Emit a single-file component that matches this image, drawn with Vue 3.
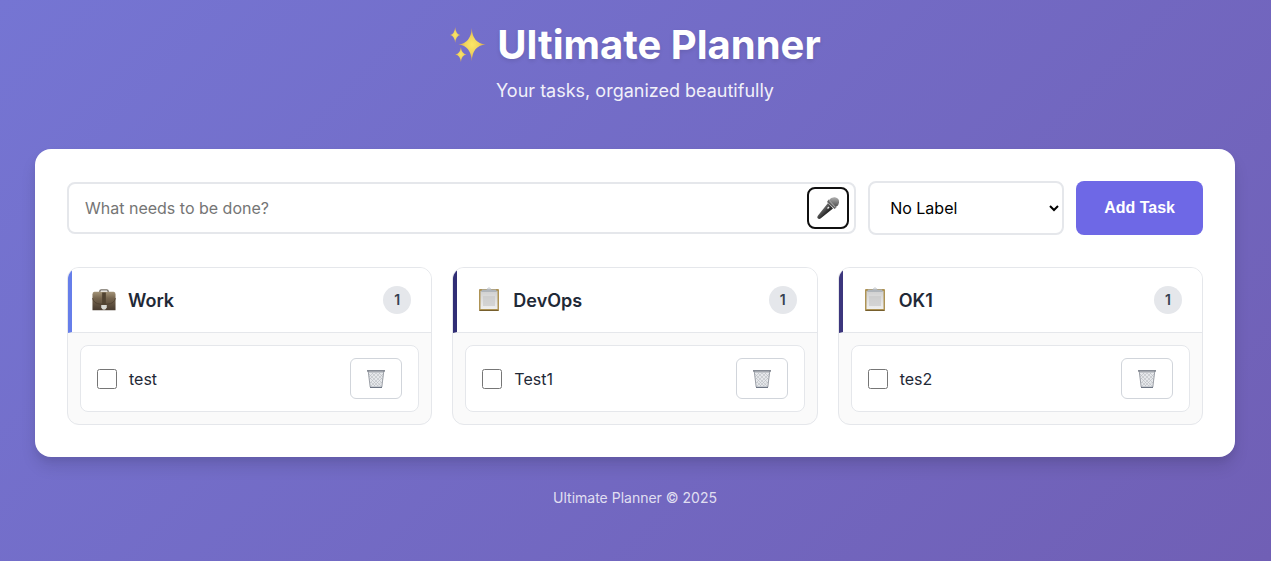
<script setup>
import { ref } from 'vue'

const draft = ref('')
const label = ref('')
const columns = ref([
  { id: 'work', name: 'Work', icon: 'briefcase', tone: 'blue', tasks: [{ id: 1, text: 'test', done: false }] },
  { id: 'devops', name: 'DevOps', icon: 'clipboard', tone: 'navy', tasks: [{ id: 2, text: 'Test1', done: false }] },
  { id: 'ok1', name: 'OK1', icon: 'clipboard', tone: 'indigo', tasks: [{ id: 3, text: 'tes2', done: false }] }
])

function addTask() {
  const text = draft.value.trim()
  const column = columns.value.find((c) => c.id === label.value) || columns.value[0]
  if (!text) return
  column.tasks.push({ id: Date.now(), text, done: false })
  draft.value = ''
}

function removeTask(column, id) {
  column.tasks = column.tasks.filter((t) => t.id !== id)
}
</script>

<template>
  <div class="page">
    <header class="hero">
      <h1>
        <svg class="sparkles" viewBox="0 0 40 40" aria-hidden="true">
          <defs>
            <radialGradient id="spark">
              <stop offset="0" stop-color="#fbe766" />
              <stop offset="0.5" stop-color="#f0d45e" />
              <stop offset="1" stop-color="#d09c50" />
            </radialGradient>
          </defs>
          <path fill="url(#spark)" d="M24 2 Q24.500 18 38.500 19.500 Q24.500 21 24 37 Q23 21 10 19.500 Q23 18 24 2Z" />
          <path fill="url(#spark)" d="M6.500 1 Q7 8.500 12 9.500 Q7 10.500 6.500 18 Q6 10.500 1 9.500 Q6 8.500 6.500 1Z" />
          <path fill="url(#spark)" d="M12.500 22 Q13 29 18.500 30 Q13 31 12.500 38 Q12 31 6.500 30 Q12 29 12.500 22Z" />
        </svg>
        <span>Ultimate Planner</span>
      </h1>
      <p>Your tasks, organized beautifully</p>
    </header>

    <main class="panel">
      <form class="composer" @submit.prevent="addTask">
        <div class="entry">
          <input v-model="draft" class="entry-input" type="text" placeholder="What needs to be done?" aria-label="New task" />
          <button class="mic" type="button" aria-label="Voice input">
            <svg viewBox="0 0 24 24" aria-hidden="true">
              <defs>
                <linearGradient id="mic-body" x1="0" y1="0" x2="1" y2="1">
                  <stop offset="0.3" stop-color="#777" />
                  <stop offset="0.6" stop-color="#292929" />
                </linearGradient>
                <linearGradient id="mic-head" x1="0" y1="0" x2="0" y2="1">
                  <stop offset="0" stop-color="#b0b0b0" />
                  <stop offset="1" stop-color="#4d4d4d" />
                </linearGradient>
              </defs>
              <path d="M12 7 L17 12.500 L4.500 22.500 Q3 23.500 1.500 22 Q.8 21 2 19.500Z" fill="url(#mic-body)" />
              <path d="M13 4 Q15 .8 19 1.200 Q23.500 2 23 6.500 Q22.500 10 19.500 11Z" fill="url(#mic-head)" />
              <path d="M12.500 3.500 L20.500 11.500 L18.500 13 L11 6Z" fill="#666" />
              <path d="M13 4.500 L19.500 11.500" stroke="#b5b5b5" stroke-width=".8" />
              <path d="M11.500 12.500 l1.500 -1.500" stroke="#eee" stroke-width="1.500" />
            </svg>
          </button>
        </div>
        <select v-model="label" class="label-select" aria-label="Label">
          <option value="">No Label</option>
          <option v-for="c in columns" :key="c.id" :value="c.id">{{ c.name }}</option>
        </select>
        <button class="add" type="submit">Add Task</button>
      </form>

      <div class="board">
        <section v-for="column in columns" :key="column.id" class="column">
          <header class="column-head" :class="column.tone">
            <svg v-if="column.icon === 'briefcase'" class="column-icon" viewBox="0 0 26 26" aria-hidden="true">
              <defs>
                <linearGradient id="case" x1="0" y1="0" x2="0" y2="1">
                  <stop offset="0" stop-color="#a49479" />
                  <stop offset="0.35" stop-color="#77664f" />
                  <stop offset="1" stop-color="#493c30" />
                </linearGradient>
              </defs>
              <path d="M8.500 5 V3.500 Q8.500 2 10 2 H16 Q17.500 2 17.500 3.500 V5" fill="none" stroke="#777066" stroke-width="1.500" />
              <path d="M2.500 4 H23.500 Q25.500 4 25.500 7 V24 H.5 V7 Q.5 4 2.500 4Z" fill="url(#case)" />
              <path d="M.5 11 Q2 17 9 17.500 H17 Q24 17 25.500 11" fill="none" stroke="#4b3c2d" stroke-width=".8" />
              <path d="M11 5 H15 V18 H11Z" fill="#514331" />
              <path d="M10 18.500 H16 V21 Q15 23.500 13 23.500 Q11 23.500 10 21Z" fill="#d9d9d4" />
            </svg>
            <svg v-else class="column-icon" viewBox="0 0 24 24" aria-hidden="true">
              <defs>
                <linearGradient id="sheet" x1="0" y1="0" x2="0" y2="1">
                  <stop offset="0" stop-color="#d0d0d0" />
                  <stop offset="1" stop-color="#efefef" />
                </linearGradient>
              </defs>
              <rect x="2" y="1" width="20" height="22" rx="1" fill="#ae9355" />
              <path d="M2.500 22.500 H21.500" stroke="#765e2c" stroke-width="1.200" />
              <rect x="3.500" y="3" width="17" height="18" fill="url(#sheet)" />
              <rect x="6" y="8" width="12" height="10" fill="#c8c8c8" opacity=".65" />
              <path d="M5 1.500 H9 Q10 1.500 10.500 .5 Q12 -1.500 13.500 .5 Q14 1.500 15 1.500 H19 L20 4 H4Z" fill="#b0b5ba" />
              <circle cx="12" cy=".6" r=".7" fill="#fff" />
            </svg>
            <h2>{{ column.name }}</h2>
            <span class="count">{{ column.tasks.length }}</span>
          </header>
          <ul class="tasks">
            <li v-for="task in column.tasks" :key="task.id" class="task">
              <label class="task-label">
                <input v-model="task.done" type="checkbox" />
                <span>{{ task.text }}</span>
              </label>
              <button class="remove" type="button" aria-label="Delete task" @click="removeTask(column, task.id)">
                <svg viewBox="0 0 18 18" aria-hidden="true">
                  <path d="M1 1 L3 17.500 H15 L17 1Z" fill="#e6e8eb" />
                  <path d="M2 4 L14 16 M5 3 L15 13 M9 3 L16 10 M12 3 L16 7 M3 8 L11 16 M4 12 L8 16 M16 4 L4 16 M13 3 L3 13 M9 3 L2.500 9.500 M6 3 L2 7 M15 8 L7 16 M14.500 12 L10.500 16" stroke="#b9bcc1" stroke-width=".6" />
                  <path d="M1.200 1 L3.200 17 M16.800 1 L14.800 17" stroke="#92969e" stroke-width=".9" />
                  <path d="M0 .8 H18" stroke="#5e6470" stroke-width="1.300" />
                  <path d="M1 2.200 H17" stroke="#a8abb2" stroke-width=".8" />
                  <path d="M3 17.300 H15" stroke="#6d7583" stroke-width="1.200" />
                </svg>
              </button>
            </li>
          </ul>
        </section>
      </div>
    </main>

    <footer class="foot">Ultimate Planner © 2025</footer>
  </div>
</template>

<style>
body {
  margin: 0;
}
</style>

<style scoped>
.page,
.page * {
  box-sizing: border-box;
}
.page {
  min-height: 100vh;
  padding: 16px 36px 40px 35px;
  background: linear-gradient(135deg, #7575d3 0%, #705fb5 100%);
  color: #1f2937;
  font-family: Inter, 'Liberation Sans', sans-serif;
  font-size: 16px;
  line-height: 24px;
}
.hero {
  color: #fff;
  text-align: center;
}
.hero h1 {
  display: flex;
  align-items: center;
  justify-content: center;
  gap: 10px;
  margin: 0;
  font-size: 40px;
  font-weight: 700;
  line-height: 58px;
  text-shadow: 0 2px 4px rgba(0, 0, 0, 0.1);
}
.sparkles {
  width: 38px;
  height: 38px;
}
.hero p {
  margin: 2px 0 0;
  font-size: 18px;
  line-height: 29px;
  opacity: 0.9;
}
.panel {
  max-width: 1240px;
  margin: 44px auto 0;
  padding: 32px;
  border-radius: 16px;
  background: #fff;
  box-shadow: 0 10px 15px rgba(0, 0, 0, 0.1), 0 4px 6px rgba(0, 0, 0, 0.05);
}
.composer {
  display: flex;
  align-items: center;
  gap: 12px;
}
.entry {
  flex: 1;
  display: flex;
  align-items: center;
  height: 52px;
  padding-right: 5px;
  border: 2px solid #e5e7eb;
  border-radius: 8px;
}
.entry-input {
  flex: 1;
  min-width: 0;
  height: 100%;
  padding: 0 16px;
  border: 0;
  outline: 0;
  background: transparent;
  color: #1f2937;
  font: inherit;
}
.entry-input::placeholder {
  color: #757575;
}
.mic {
  display: grid;
  place-items: center;
  width: 42px;
  height: 42px;
  padding: 0;
  border: 2px solid #101010;
  border-radius: 8px;
  background: #fff;
}
.mic svg {
  width: 24px;
  height: 24px;
}
.label-select {
  width: 196px;
  height: 54px;
  padding: 0 0 0 16px;
  border: 2px solid #e5e7eb;
  border-radius: 8px;
  background: #fff;
  color: #000;
  font: inherit;
}
.add {
  height: 54px;
  padding: 0 28px;
  border: 0;
  border-radius: 8px;
  background: #6e68e6;
  color: #fff;
  font-family: 'Liberation Sans', Arial, sans-serif;
  font-size: 16px;
  font-weight: 700;
}
.board {
  display: grid;
  grid-template-columns: repeat(3, 1fr);
  gap: 20px;
  margin-top: 32px;
}
.column {
  overflow: hidden;
  border: 1px solid #e5e7eb;
  border-radius: 12px;
  background: #fafafa;
}
.column-head {
  display: flex;
  align-items: center;
  gap: 12px;
  height: 65px;
  padding: 0 20px;
  border-bottom: 1px solid #e5e7eb;
  border-left: 4px solid;
  background: #fff;
}
.column-head.blue {
  border-left-color: #667eea;
}
.column-head.navy {
  border-left-color: #312e75;
}
.column-head.indigo {
  border-left-color: #3c367d;
}
.column-icon {
  overflow: visible;
  width: 24px;
  height: 24px;
}
.column-head h2 {
  flex: 1;
  margin: 0;
  font-size: 18px;
  font-weight: 600;
  line-height: 27px;
}
.count {
  min-width: 28px;
  border-radius: 14px;
  background: #e5e7eb;
  color: #374151;
  font-size: 14px;
  font-weight: 600;
  line-height: 28px;
  text-align: center;
}
.tasks {
  display: grid;
  gap: 12px;
  margin: 0;
  padding: 12px;
  list-style: none;
}
.task {
  display: flex;
  align-items: center;
  padding: 12px 16px;
  border: 1px solid #e5e7eb;
  border-radius: 8px;
  background: #fff;
}
.task-label {
  flex: 1;
  display: flex;
  align-items: center;
  gap: 12px;
}
.task-label input {
  width: 20px;
  height: 20px;
  margin: 0;
}
.remove {
  display: grid;
  place-items: center;
  width: 52px;
  height: 41px;
  padding: 0;
  border: 1px solid #d1d5db;
  border-radius: 6px;
  background: #fff;
}
.remove svg {
  width: 18px;
  height: 18px;
}
.foot {
  margin-top: 30px;
  color: rgba(255, 255, 255, 0.8);
  font-size: 14px;
  line-height: 22px;
  text-align: center;
}
</style>
